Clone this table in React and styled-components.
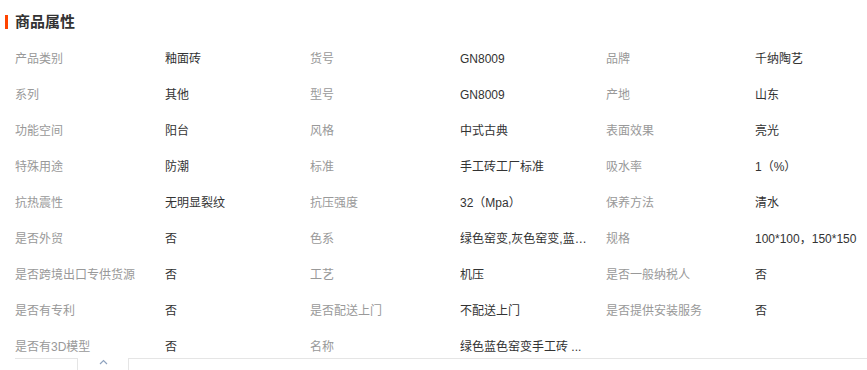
import styled, { createGlobalStyle } from "styled-components";

const GlobalStyle = createGlobalStyle`
  body {
    margin: 0;
    background: #fff;
    font-family: "Liberation Sans", "Noto Sans CJK SC", sans-serif;
  }
`;

const Container = styled.div`
  width: 867px;
  height: 370px;
  overflow: hidden;
`;

const Title = styled.h3`
  margin: 0;
  padding: 12px 0 0 5px;
  display: flex;
  align-items: center;
  gap: 7px;
  height: 20px;
  font-size: 15px;
  font-weight: 700;
  color: #333;
  line-height: 20px;

  &::before {
    content: "";
    width: 3px;
    height: 14px;
    background: #ff4400;
  }
`;

const AttrList = styled.ul`
  list-style: none;
  margin: 16px 0 0;
  padding: 0 0 0 15px;
  display: grid;
  grid-template-columns: 150px 145px 150px 146px 149px 1fr;
  row-gap: 14px;
`;

const Cell = styled.li`
  height: 22px;
  line-height: 22px;
  font-size: 12px;
  color: ${({ $label }) => ($label ? "#999" : "#333")};
  white-space: nowrap;
  overflow: ${({ $last }) => ($last ? "visible" : "hidden")};
  text-overflow: ellipsis;
  padding-right: ${({ $last }) => ($last ? "0" : "14px")};
`;

const Footer = styled.div`
  display: flex;
  padding-left: 15px;
  height: 12px;
`;

const Line = styled.div`
  border-top: 1px solid #e5e5e5;
  width: ${({ $w }) => ($w ? `${$w}px` : "auto")};
  flex: ${({ $w }) => ($w ? "none" : 1)};
`;

const ToggleTab = styled.div`
  width: 50px;
  border-left: 1px solid #e5e5e5;
  border-right: 1px solid #e5e5e5;
  display: flex;
  justify-content: center;
  padding-top: 1px;

  svg {
    width: 9px;
    height: 6px;
  }
`;

const attrs = [
  ["产品类别", "釉面砖", "货号", "GN8009", "品牌", "千纳陶艺"],
  ["系列", "其他", "型号", "GN8009", "产地", "山东"],
  ["功能空间", "阳台", "风格", "中式古典", "表面效果", "亮光"],
  ["特殊用途", "防潮", "标准", "手工砖工厂标准", "吸水率", "1（%）"],
  ["抗热震性", "无明显裂纹", "抗压强度", "32（Mpa）", "保养方法", "清水"],
  ["是否外贸", "否", "色系", "绿色窑变,灰色窑变,蓝色窑变", "规格", "100*100，150*150"],
  ["是否跨境出口专供货源", "否", "工艺", "机压", "是否一般纳税人", "否"],
  ["是否有专利", "否", "是否配送上门", "不配送上门", "是否提供安装服务", "否"],
  ["是否有3D模型", "否", "名称", "绿色蓝色窑变手工砖 ...", "", ""],
];

function App() {
  return (
    <Container>
      <GlobalStyle />
      <Title>商品属性</Title>
      <AttrList>
        {attrs.map((row, r) =>
          row.map((text, i) => (
            <Cell key={`${r}-${i}`} $label={i % 2 === 0} $last={i === 5}>
              {text}
            </Cell>
          ))
        )}
      </AttrList>
      <Footer>
        <Line $w={62} />
        <ToggleTab>
          <svg viewBox="0 0 9 6">
            <polyline points="1,5 4.5,1.5 8,5" fill="none" stroke="#8fa3bf" strokeWidth="1.2" />
          </svg>
        </ToggleTab>
        <Line />
      </Footer>
    </Container>
  );
}

export default App;
